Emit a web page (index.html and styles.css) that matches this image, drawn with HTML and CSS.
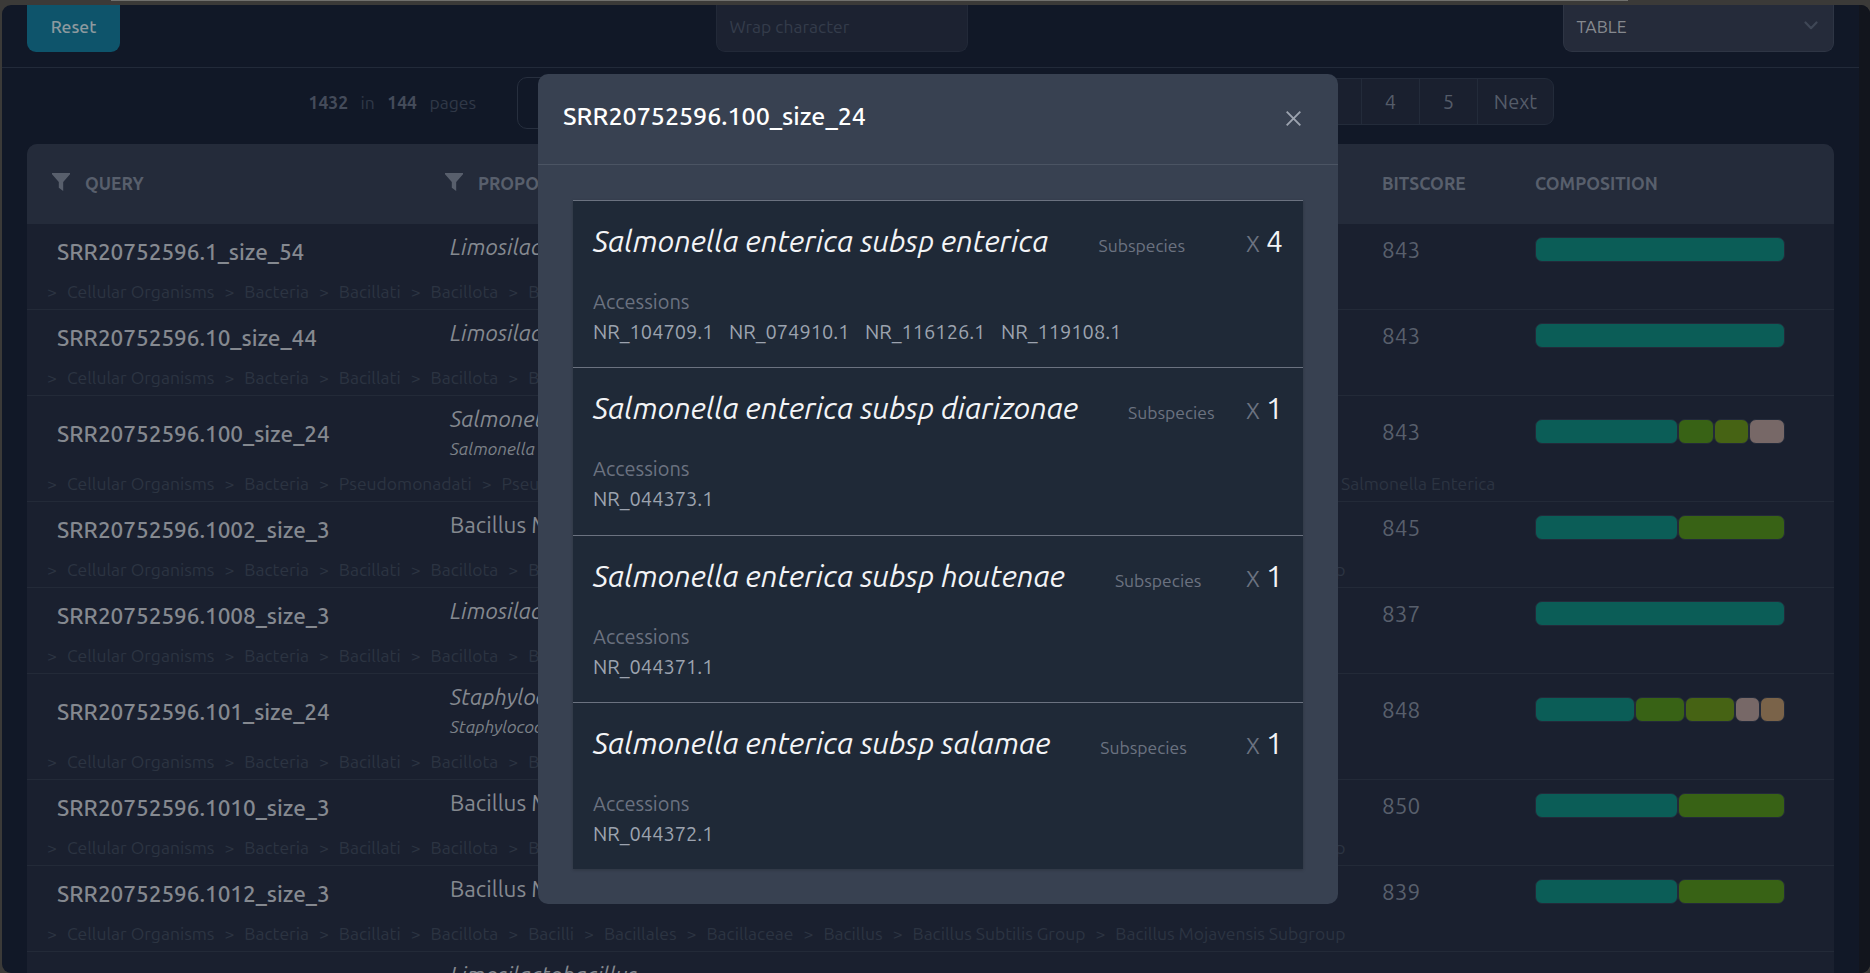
FILE: index.html
```html
<!DOCTYPE html>
<html lang="en">
<head>
<meta charset="utf-8">
<title>Query results</title>
<link rel="stylesheet" href="styles.css">
</head>
<body>
<div class="edge"></div>
<div class="app">
  <div class="page">
    <header class="toolbar">
      <button class="reset">Reset</button>
      <div class="wrap-input">Wrap character</div>
      <div class="select">TABLE
        <svg class="chevron" viewBox="0 0 14 9"><path d="M1.5 1.5 7 7.2 12.5 1.5" fill="none" stroke="currentColor" stroke-width="2.2" stroke-linecap="round" stroke-linejoin="round"/></svg>
      </div>
    </header>
    <nav class="pager">
      <div class="totals"><b>1432</b><span>in</span><b>144</b><span>pages</span></div>
      <div class="goto"></div>
      <div class="pages"><span></span><span>4</span><span>5</span><span class="next">Next</span></div>
    </nav>
    <section class="table">
      <div class="thead">
        <div class="th"><svg class="funnel" viewBox="0 0 18 18"><path d="M0 0h18v1.2L11.2 9v9L6.8 14.8V9L0 1.2z" fill="currentColor"/></svg>QUERY</div>
        <div class="th"><svg class="funnel" viewBox="0 0 18 18"><path d="M0 0h18v1.2L11.2 9v9L6.8 14.8V9L0 1.2z" fill="currentColor"/></svg>PROPOSAL</div>
        <div class="th plain">BITSCORE</div>
        <div class="th plain">COMPOSITION</div>
      </div>

      <div class="row">
        <div class="main"><div class="query">SRR20752596.1_size_54</div><div class="taxa"><i>Limosilactobacillus</i></div><div class="score">843</div><div class="bar"><span class="c1" style="width:100%"></span></div></div>
        <div class="lineage"><span>&gt;</span><span>Cellular Organisms</span><span>&gt;</span><span>Bacteria</span><span>&gt;</span><span>Bacillati</span><span>&gt;</span><span>Bacillota</span><span>&gt;</span><span>Bacilli</span></div>
      </div>
      <div class="row">
        <div class="main"><div class="query">SRR20752596.10_size_44</div><div class="taxa"><i>Limosilactobacillus</i></div><div class="score">843</div><div class="bar"><span class="c1" style="width:100%"></span></div></div>
        <div class="lineage"><span>&gt;</span><span>Cellular Organisms</span><span>&gt;</span><span>Bacteria</span><span>&gt;</span><span>Bacillati</span><span>&gt;</span><span>Bacillota</span><span>&gt;</span><span>Bacilli</span></div>
      </div>
      <div class="row tall">
        <div class="main"><div class="query">SRR20752596.100_size_24</div><div class="taxa"><i>Salmonella enterica</i><i class="sub">Salmonella enterica</i></div><div class="score">843</div><div class="bar"><span class="c1" style="width:57.143%"></span><span class="c2" style="width:14.286%"></span><span class="c3" style="width:14.286%"></span><span class="c4" style="width:14.286%"></span></div></div>
        <div class="lineage"><span>&gt;</span><span>Cellular Organisms</span><span>&gt;</span><span>Bacteria</span><span>&gt;</span><span>Pseudomonadati</span><span>&gt;</span><span>Pseudomonadota</span><span>&gt;</span><span>Gammaproteobacteria</span><span>&gt;</span><span>Enterobacterales</span><span>&gt;</span><span>Enterobacteriaceae</span><span>&gt;</span><span>Salmonella</span><span>&gt;</span><span>Salmonella Enterica</span></div>
      </div>
      <div class="row">
        <div class="main"><div class="query">SRR20752596.1002_size_3</div><div class="taxa"><span>Bacillus Mojavensis Subgroup</span></div><div class="score">845</div><div class="bar"><span class="c1" style="width:57.143%"></span><span class="c2" style="width:42.857%"></span></div></div>
        <div class="lineage"><span>&gt;</span><span>Cellular Organisms</span><span>&gt;</span><span>Bacteria</span><span>&gt;</span><span>Bacillati</span><span>&gt;</span><span>Bacillota</span><span>&gt;</span><span>Bacilli</span><span>&gt;</span><span>Bacillales</span><span>&gt;</span><span>Bacillaceae</span><span>&gt;</span><span>Bacillus</span><span>&gt;</span><span>Bacillus Subtilis Group</span><span>&gt;</span><span>Bacillus Mojavensis Subgroup</span></div>
      </div>
      <div class="row">
        <div class="main"><div class="query">SRR20752596.1008_size_3</div><div class="taxa"><i>Limosilactobacillus</i></div><div class="score">837</div><div class="bar"><span class="c1" style="width:100%"></span></div></div>
        <div class="lineage"><span>&gt;</span><span>Cellular Organisms</span><span>&gt;</span><span>Bacteria</span><span>&gt;</span><span>Bacillati</span><span>&gt;</span><span>Bacillota</span><span>&gt;</span><span>Bacilli</span></div>
      </div>
      <div class="row tall">
        <div class="main"><div class="query">SRR20752596.101_size_24</div><div class="taxa"><i>Staphylococcus</i><i class="sub">Staphylococcus</i></div><div class="score">848</div><div class="bar"><span class="c1" style="width:40%"></span><span class="c2" style="width:20%"></span><span class="c3" style="width:20%"></span><span class="c4" style="width:10%"></span><span class="c5" style="width:10%"></span></div></div>
        <div class="lineage"><span>&gt;</span><span>Cellular Organisms</span><span>&gt;</span><span>Bacteria</span><span>&gt;</span><span>Bacillati</span><span>&gt;</span><span>Bacillota</span><span>&gt;</span><span>Bacilli</span></div>
      </div>
      <div class="row">
        <div class="main"><div class="query">SRR20752596.1010_size_3</div><div class="taxa"><span>Bacillus Mojavensis Subgroup</span></div><div class="score">850</div><div class="bar"><span class="c1" style="width:57.143%"></span><span class="c2" style="width:42.857%"></span></div></div>
        <div class="lineage"><span>&gt;</span><span>Cellular Organisms</span><span>&gt;</span><span>Bacteria</span><span>&gt;</span><span>Bacillati</span><span>&gt;</span><span>Bacillota</span><span>&gt;</span><span>Bacilli</span><span>&gt;</span><span>Bacillales</span><span>&gt;</span><span>Bacillaceae</span><span>&gt;</span><span>Bacillus</span><span>&gt;</span><span>Bacillus Subtilis Group</span><span>&gt;</span><span>Bacillus Mojavensis Subgroup</span></div>
      </div>
      <div class="row">
        <div class="main"><div class="query">SRR20752596.1012_size_3</div><div class="taxa"><span>Bacillus Mojavensis Subgroup</span></div><div class="score">839</div><div class="bar"><span class="c1" style="width:57.143%"></span><span class="c2" style="width:42.857%"></span></div></div>
        <div class="lineage"><span>&gt;</span><span>Cellular Organisms</span><span>&gt;</span><span>Bacteria</span><span>&gt;</span><span>Bacillati</span><span>&gt;</span><span>Bacillota</span><span>&gt;</span><span>Bacilli</span><span>&gt;</span><span>Bacillales</span><span>&gt;</span><span>Bacillaceae</span><span>&gt;</span><span>Bacillus</span><span>&gt;</span><span>Bacillus Subtilis Group</span><span>&gt;</span><span>Bacillus Mojavensis Subgroup</span></div>
      </div>
      <div class="row">
        <div class="main"><div class="query"></div><div class="taxa"><i>Limosilactobacillus</i></div></div>
      </div>
    </section>
  </div>
  <div class="scrollbar"></div>
</div>

<div class="modal">
  <div class="modal-head">
    <h3>SRR20752596.100_size_24</h3>
    <svg class="close" viewBox="0 0 15 15"><path d="M.7.7 14.3 14.3M14.3.7.7 14.3" fill="none" stroke="currentColor" stroke-width="1.9"/></svg>
  </div>
  <div class="cards">
    <div class="card">
      <div class="card-top"><i>Salmonella enterica subsp enterica</i><span class="rank">Subspecies</span><span class="count"><small>X</small>4</span></div>
      <div class="label">Accessions</div>
      <div class="acc"><span>NR_104709.1</span><span>NR_074910.1</span><span>NR_116126.1</span><span>NR_119108.1</span></div>
    </div>
    <div class="card">
      <div class="card-top"><i>Salmonella enterica subsp diarizonae</i><span class="rank">Subspecies</span><span class="count"><small>X</small>1</span></div>
      <div class="label">Accessions</div>
      <div class="acc"><span>NR_044373.1</span></div>
    </div>
    <div class="card">
      <div class="card-top"><i>Salmonella enterica subsp houtenae</i><span class="rank">Subspecies</span><span class="count"><small>X</small>1</span></div>
      <div class="label">Accessions</div>
      <div class="acc"><span>NR_044371.1</span></div>
    </div>
    <div class="card">
      <div class="card-top"><i>Salmonella enterica subsp salamae</i><span class="rank">Subspecies</span><span class="count"><small>X</small>1</span></div>
      <div class="label">Accessions</div>
      <div class="acc"><span>NR_044372.1</span></div>
    </div>
  </div>
</div>
</body>
</html>
```
FILE: styles.css
```css
* { box-sizing: border-box; }
body {
  margin: 0;
  width: 1870px;
  height: 973px;
  overflow: hidden;
  background: #3b3a38;
  font-family: Ubuntu, "Noto Sans", sans-serif;
  font-size: 20px;
  color: #858990;
}
.edge { height: 1px; margin: 0 242px 0 111px; background: #70706d; }
.app {
  display: flex;
  height: 968px;
  margin: 4px 0 0 2px;
  border-radius: 9px;
  overflow: hidden;
  background: #111827;
}
.page { width: 1857px; }
.scrollbar { flex: 1; background: #12151d; }

/* toolbar */
.toolbar {
  display: flex;
  height: 63px;
  padding: 0 25px;
  border-bottom: 1px solid #222a39;
  font-size: 17.5px;
}
.reset {
  width: 93px;
  height: 47px;
  padding: 0 0 4px;
  border: 0;
  border-radius: 0 0 9px 9px;
  background: #0e546b;
  color: #8d9a9f;
  font: 500 17.5px Ubuntu, "Noto Sans", sans-serif;
}
.wrap-input, .select {
  height: 47px;
  border: 1px solid #222938;
  border-top: 0;
  border-radius: 0 0 9px 9px;
  background: #1c2231;
  padding: 0 12.5px;
  line-height: 44px;
}
.wrap-input { width: 252px; margin-left: 596px; color: #343c4b; }
.select {
  display: flex;
  justify-content: space-between;
  align-items: flex-start;
  width: 271px;
  margin-left: auto;
  padding-right: 15px;
  background: #252b3a;
  border-color: #2e3544;
  color: #85898f;
}
.chevron { width: 14px; height: 9px; margin-top: 16px; color: #3f4756; }

/* pagination */
.pager { display: flex; height: 76px; }
.totals {
  display: flex;
  gap: 12.5px;
  width: 515px;
  padding: 0 41px 0 0;
  justify-content: flex-end;
  line-height: 69px;
  font-size: 17.5px;
  color: #303847;
}
.totals b { font-weight: 700; color: #444b5a; }
.goto { width: 300px; height: 52px; margin-top: 9px; border: 1px solid #272f3e; border-radius: 10px; }
.pages {
  display: flex;
  height: 47px;
  margin: 10px 305px 0 auto;
  border: 1px solid #232b3a;
  border-radius: 9px;
  background: #1a202f;
  color: #555c69;
  line-height: 46px;
  overflow: hidden;
}
.pages span { width: 58px; border-left: 1px solid #232b3a; text-align: center; }
.pages .next { width: 76px; }

/* table */
.table { margin: 0 25px; border-radius: 10px 10px 0 0; overflow: hidden; background: #1a202f; }
.main { display: grid; grid-template-columns: 423px 932px 153px 250px; height: 56px; align-items: center; }
.thead {
  display: grid;
  grid-template-columns: 393px 962px 153px 1fr;
  height: 80px;
  background: #242b3a;
  font-size: 17.5px;
  font-weight: 700;
  line-height: 77px;
  color: #585f6c;
}
.th { display: flex; align-items: center; height: 78px; padding-left: 25px; }
.th.plain { padding-left: 0; }
.funnel { width: 18px; height: 18px; margin: 0 15px 3px 0; }
.row { height: 86px; border-bottom: 1px solid #232a38; }
.tall { height: 106px; }
.tall .main { height: 76px; }
.query { padding: 0 0 2px 30px; font-size: 22.5px; font-weight: 500; }
.taxa { display: flex; flex-direction: column; align-self: start; padding-top: 7px; font-size: 22.5px; line-height: 31px; }
.taxa .sub { font-size: 17.5px; line-height: 29px; color: #7c8188; }
.score { padding-bottom: 6px; font-size: 22.5px; color: #585f6c; }
.bar { display: flex; height: 25px; margin-bottom: 5px; }
.bar span { border: 1px solid #232a3a; border-radius: 7px; }
.c1 { background: #0b5d57; }
.c2 { background: #386215; }
.c3 { background: #466314; }
.c4 { background: #776867; }
.c5 { background: #7a6349; }
.lineage {
  display: flex;
  gap: 10px;
  padding-left: 20px;
  font-size: 17.5px;
  line-height: 24px;
  color: #2c3442;
  white-space: nowrap;
}

/* modal over the page */
.modal {
  position: absolute;
  left: 538px;
  top: 74px;
  width: 800px;
  height: 830px;
  border-radius: 10px;
  background: #384151;
}
.modal-head {
  display: flex;
  justify-content: space-between;
  height: 91px;
  padding: 0 37px 0 25px;
  border-bottom: 1px solid #4b5463;
}
.modal-head h3 { margin: 0; font-size: 25px; font-weight: 500; line-height: 84px; color: #fff; }
.close { width: 15px; height: 15px; margin-top: 37px; color: #9ca3af; }
.cards { margin: 35px 35px 0; box-shadow: 0 1px 3px rgba(0, 0, 0, .2); }
.card {
  height: 167.25px;
  padding: 20px 20px 0;
  border-top: 1px solid #6b7280;
  background: #1f2937;
}
.card-top { display: flex; align-items: baseline; font-size: 30px; line-height: 40px; color: #f3f4f6; }
.rank { margin-left: 50px; font-size: 17.5px; color: #6b7280; }
.count { width: 37px; margin-left: auto; white-space: nowrap; }
.count small { margin-right: 6px; font-size: 22.5px; color: #6b7280; }
.label { margin-top: 21px; line-height: 30px; color: #6b7280; }
.acc { display: flex; gap: 15.5px; line-height: 30px; color: #9ca3af; }
```
